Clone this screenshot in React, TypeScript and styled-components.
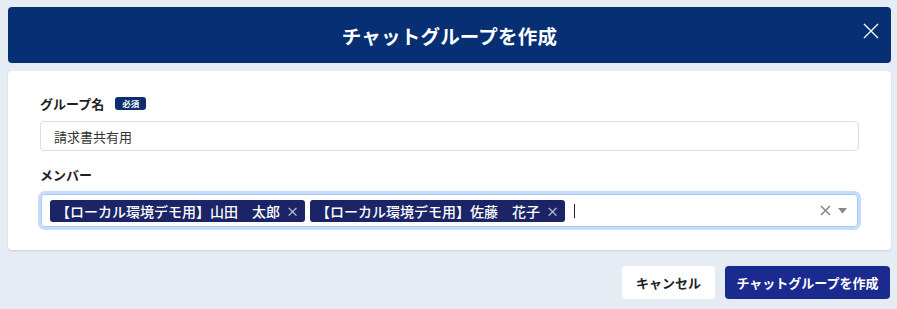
import React from "react";
import styled, { createGlobalStyle } from "styled-components";

const GlobalStyle = createGlobalStyle`
  html, body {
    margin: 0;
    padding: 0;
    background: #e6ecf4;
    font-family: "Noto Sans CJK JP", "Noto Sans", sans-serif;
    color: #222;
  }
  * { box-sizing: border-box; }
`;

const Page = styled.div`
  width: 897px;
  height: 309px;
  padding: 7px 6px 0 8px;
  display: flex;
  flex-direction: column;
`;

const Header = styled.div`
  position: relative;
  height: 56px;
  background: #062f74;
  border-radius: 4px;
  display: flex;
  align-items: center;
  justify-content: center;
  color: #ffffff;
  font-size: 19.5px;
  font-weight: 700;
  letter-spacing: 0.2px;
`;

const CloseButton = styled.button`
  position: absolute;
  top: 12px;
  right: 8px;
  width: 24px;
  height: 24px;
  padding: 0;
  border: none;
  background: transparent;
  display: flex;
  align-items: center;
  justify-content: center;
  cursor: pointer;
`;

const Card = styled.div`
  margin-top: 8px;
  background: #ffffff;
  border-radius: 4px;
  box-shadow: 0 1px 2px rgba(30, 40, 70, 0.14);
  padding: 24px 32px 23px;
  display: flex;
  flex-direction: column;
`;

const LabelRow = styled.div<{ $spaced?: boolean }>`
  display: flex;
  align-items: center;
  gap: 11px;
  height: 16px;
  margin-top: ${(p) => (p.$spaced ? "15px" : "0")};
  margin-bottom: 10px;
  font-size: 13px;
  font-weight: 700;
  color: #222;
`;

const Badge = styled.span`
  display: inline-flex;
  align-items: center;
  justify-content: center;
  width: 31px;
  height: 13px;
  border-radius: 3px;
  background: #0a2e6e;
  color: #ffffff;
  font-size: 8.5px;
  font-weight: 700;
`;

const TextInput = styled.div`
  height: 30px;
  border: 1px solid #d9dee7;
  border-radius: 4px;
  padding: 0 13px;
  display: flex;
  align-items: center;
  font-size: 13px;
  color: #333;
`;

const MultiSelect = styled.div`
  height: 33px;
  margin: 2px 1px 0;
  border: 1px solid #a8c8f4;
  border-radius: 4px;
  box-shadow: 0 0 0 3px #c7dcf8;
  padding: 0 8px;
  display: flex;
  align-items: center;
  gap: 5px;
`;

const Chip = styled.span`
  height: 22px;
  padding: 0 6px 0 6px;
  border-radius: 3px;
  background: #1a2467;
  color: #ffffff;
  font-size: 14px;
  font-weight: 500;
  display: inline-flex;
  align-items: center;
  gap: 6px;
  white-space: nowrap;
`;

const ChipRemove = styled.span`
  color: #c2c6d6;
  font-size: 13px;
  line-height: 1;
`;

const Caret = styled.span`
  width: 1px;
  height: 14px;
  margin-left: 4px;
  background: #222;
`;

const Indicators = styled.div`
  margin-left: auto;
  display: flex;
  align-items: center;
  gap: 7px;
  padding-right: 2px;
`;

const Footer = styled.div`
  margin-top: 16px;
  display: flex;
  justify-content: flex-end;
  gap: 10px;
  padding-right: 1px;
`;

const Button = styled.button<{ $primary?: boolean }>`
  height: 33px;
  padding: 0 ${(p) => (p.$primary ? "11.5px" : "14px")};
  border-radius: 4px;
  border: none;
  background: ${(p) => (p.$primary ? "#1a2a8e" : "#ffffff")};
  color: ${(p) => (p.$primary ? "#ffffff" : "#222")};
  font-family: inherit;
  font-size: 13px;
  font-weight: 700;
  cursor: pointer;
`;

const members = ["【ローカル環境デモ用】山田　太郎", "【ローカル環境デモ用】佐藤　花子"];

export default function App() {
  return (
    <>
      <GlobalStyle />
      <Page>
        <Header>
          チャットグループを作成
          <CloseButton aria-label="閉じる">
            <svg width="16" height="16" viewBox="0 0 16 16">
              <path d="M1 1 L15 15 M15 1 L1 15" stroke="#ffffff" strokeWidth="1.4" />
            </svg>
          </CloseButton>
        </Header>
        <Card>
          <LabelRow>
            グループ名
            <Badge>必須</Badge>
          </LabelRow>
          <TextInput>請求書共有用</TextInput>
          <LabelRow $spaced>メンバー</LabelRow>
          <MultiSelect>
            {members.map((m) => (
              <Chip key={m}>
                {m}
                <ChipRemove>×</ChipRemove>
              </Chip>
            ))}
            <Caret />
            <Indicators>
              <svg width="11" height="11" viewBox="0 0 11 11">
                <path d="M1 1 L10 10 M10 1 L1 10" stroke="#888" strokeWidth="1.6" />
              </svg>
              <svg width="9" height="6" viewBox="0 0 9 6">
                <path d="M0 0 H9 L4.5 5.5 Z" fill="#888" />
              </svg>
            </Indicators>
          </MultiSelect>
        </Card>
        <Footer>
          <Button>キャンセル</Button>
          <Button $primary>チャットグループを作成</Button>
        </Footer>
      </Page>
    </>
  );
}
